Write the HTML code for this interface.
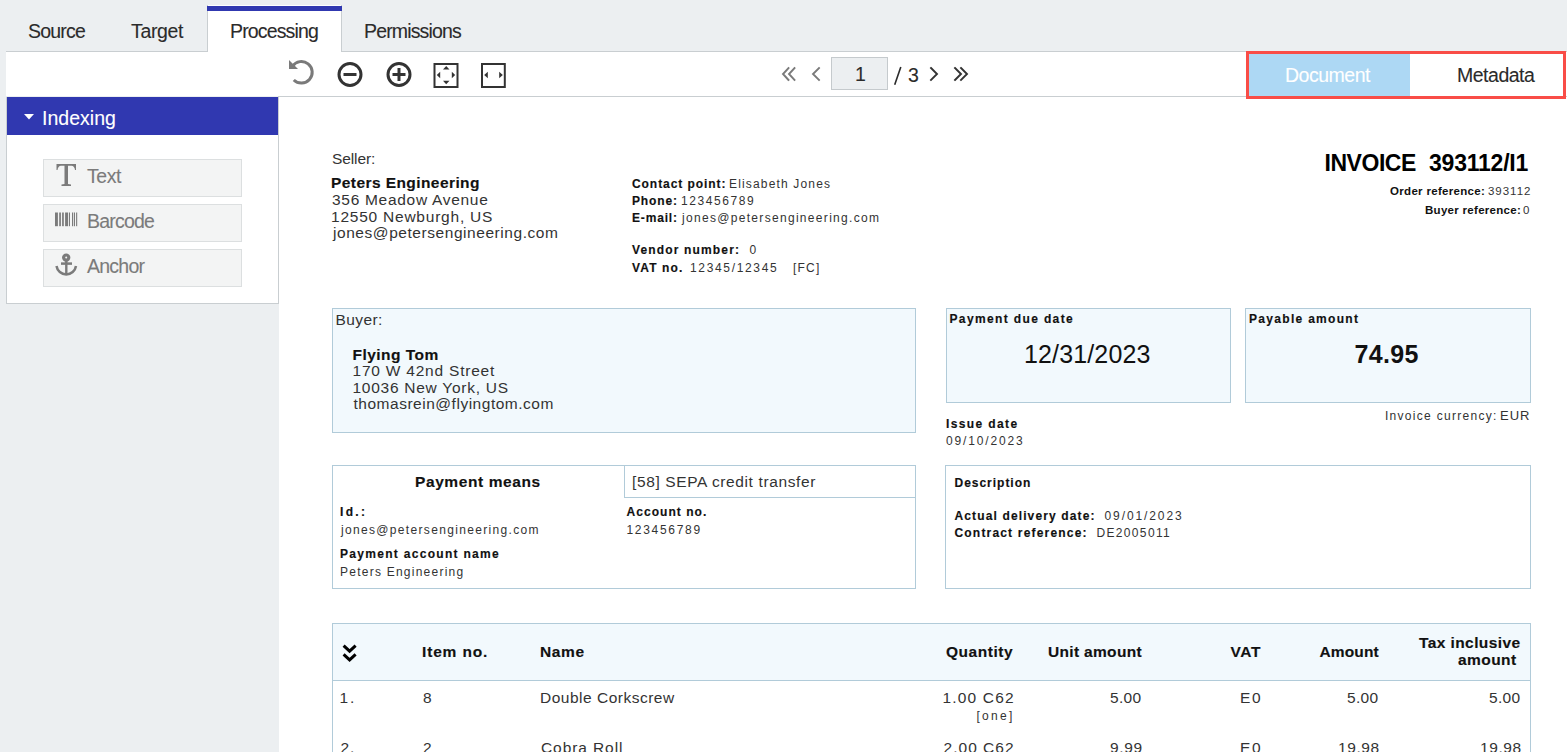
<!DOCTYPE html>
<html><head><meta charset="utf-8"><style>
html,body{margin:0;padding:0;}
body{width:1567px;height:752px;overflow:hidden;background:#eceff1;position:relative;font-family:"Liberation Sans",sans-serif;}
.r{position:absolute;}
.t{position:absolute;white-space:pre;line-height:0;}
</style></head><body>
<div class="r" style="left:6px;top:51px;width:1561px;height:1px;background:#c9ced1;"></div>
<div class="r" style="left:6px;top:52px;width:1561px;height:44px;background:#fff;"></div>
<div class="r" style="left:278px;top:96px;width:1289px;height:1px;background:#c9ced1;"></div>
<div class="r" style="left:279px;top:97px;width:1288px;height:655px;background:#fff;"></div>
<div class="r" style="left:207px;top:5px;width:135px;height:47px;background:#fff;box-sizing:border-box;border-left:1px solid #c9ced1;border-right:1px solid #c9ced1;"></div>
<div class="r" style="left:207px;top:6px;width:135px;height:5px;background:#3038b0;"></div>
<div class="r" style="left:6px;top:97px;width:273px;height:207px;background:#fff;box-sizing:border-box;border:1px solid #c9ced1;border-top:none;"></div>
<div class="r" style="left:7px;top:97px;width:271px;height:38px;background:#3038b0;"></div>
<div class="r" style="left:43px;top:159px;width:199px;height:38px;background:#f3f4f4;box-sizing:border-box;border:1px solid #dcdfe0;"></div>
<div class="r" style="left:43px;top:204px;width:199px;height:38px;background:#f3f4f4;box-sizing:border-box;border:1px solid #dcdfe0;"></div>
<div class="r" style="left:43px;top:249px;width:199px;height:38px;background:#f3f4f4;box-sizing:border-box;border:1px solid #dcdfe0;"></div>
<div class="r" style="left:831px;top:57px;width:57px;height:33px;background:#eceff1;box-sizing:border-box;border:1px solid #c5cacd;"></div>
<div class="r" style="left:1246px;top:51px;width:320px;height:48px;background:#fff;box-sizing:border-box;border:3px solid #f94d47;"></div>
<div class="r" style="left:1249px;top:54px;width:161px;height:42px;background:#add8f4;"></div>
<div class="r" style="left:332px;top:308px;width:584px;height:125px;background:#f2f9fd;box-sizing:border-box;border:1px solid #b1cbd9;"></div>
<div class="r" style="left:946px;top:308px;width:285px;height:95px;background:#f2f9fd;box-sizing:border-box;border:1px solid #b1cbd9;"></div>
<div class="r" style="left:1245px;top:308px;width:286px;height:95px;background:#f2f9fd;box-sizing:border-box;border:1px solid #b1cbd9;"></div>
<div class="r" style="left:332px;top:465px;width:584px;height:124px;background:#fff;box-sizing:border-box;border:1px solid #b1cbd9;"></div>
<div class="r" style="left:624px;top:465px;width:292px;height:33px;background:#fff;box-sizing:border-box;border:1px solid #b1cbd9;"></div>
<div class="r" style="left:945px;top:465px;width:586px;height:124px;background:#fff;box-sizing:border-box;border:1px solid #b1cbd9;"></div>
<div class="r" style="left:332px;top:623px;width:1199px;height:140px;background:#fff;box-sizing:border-box;border:1px solid #b1cbd9;"></div>
<div class="r" style="left:333px;top:624px;width:1197px;height:56px;background:#f2f9fd;"></div>
<div class="r" style="left:333px;top:680px;width:1197px;height:1px;background:#b1cbd9;"></div>
<svg class="r" style="left:0;top:0" width="1567" height="752" viewBox="0 0 1567 752">
<g fill="none" stroke-width="3">
 <path d="M292.55 66.1 A10.8 10.8 0 1 1 293.76 79.94" stroke="#7a7a7a"/>
 <circle cx="350" cy="74.5" r="11" stroke="#333"/>
 <circle cx="399" cy="74.5" r="11" stroke="#333"/>
</g>
<path d="M289 60 L289 69 L298 69 Z" fill="#7a7a7a"/>
<rect x="343.5" y="73" width="13" height="3" fill="#333"/>
<rect x="392.5" y="73" width="13" height="3" fill="#333"/>
<rect x="397.5" y="68" width="3" height="13" fill="#333"/>
<rect x="434.5" y="64" width="23" height="23" fill="none" stroke="#333" stroke-width="2"/>
<rect x="482" y="64" width="22.8" height="23" fill="none" stroke="#333" stroke-width="2"/>
<g fill="#333">
 <path d="M446.2 66 L449.5 69.5 L443 69.5 Z"/>
 <path d="M446.2 84.2 L449.5 80.8 L443 80.8 Z"/>
 <path d="M436.8 75 L440.2 71.8 L440.2 78.2 Z"/>
 <path d="M455.2 75 L451.8 71.8 L451.8 78.2 Z"/>
 <path d="M484.2 75 L487.8 71.8 L487.8 78.2 Z"/>
 <path d="M502.8 75 L499.2 71.8 L499.2 78.2 Z"/>
</g>
<g fill="none" stroke-width="1.9" stroke-linecap="square">
 <path d="M788.5 68 L783 74 L788.5 80 M794.5 68 L789 74 L794.5 80" stroke="#7a7a7a"/>
 <path d="M819 68 L813 74 L819 80" stroke="#7a7a7a"/>
 <path d="M931 68 L937 74 L931 80" stroke="#333"/>
 <path d="M955 68 L961 74 L955 80 M961 68 L967 74 L961 80" stroke="#333"/>
</g>
<g fill="none" stroke="#000" stroke-width="3" stroke-linejoin="miter">
 <path d="M343.6 645.6 L349.6 651.2 L355.6 645.6"/>
 <path d="M343.6 654.3 L349.6 659.9 L355.6 654.3"/>
</g>
<!-- T icon -->
<g fill="#7b7b7b">
 <path d="M56.5 164 H76 V170 H75 Q74.5 166 71.5 165.8 H68 V184 L71 184.6 V186 H61.5 V184.6 L64.5 184 V165.8 H61 Q58 166 57.5 170 H56.5 Z"/>
</g>
<!-- barcode -->
<g fill="#7b7b7b">
 <rect x="55" y="212.5" width="2.9" height="13.7"/>
 <rect x="59.2" y="212.5" width="1.7" height="13.7"/>
 <rect x="62.1" y="212.5" width="1.7" height="13.7"/>
 <rect x="65.1" y="212.5" width="2.9" height="13.7"/>
 <rect x="68.9" y="212.5" width="1.1" height="13.7"/>
 <rect x="72" y="212.5" width="1.1" height="13.7"/>
 <rect x="73.9" y="212.5" width="1.1" height="13.7"/>
 <rect x="76.1" y="212.5" width="1.1" height="13.7"/>
</g>
<!-- anchor -->
<g fill="none" stroke="#7b7b7b">
 <circle cx="66.2" cy="257.6" r="2.6" stroke-width="3.2"/>
 <path d="M66.3 260 V275" stroke-width="2.4"/>
 <path d="M61 263.6 H72" stroke-width="2.5"/>
 <path d="M56.5 266 A9.86 9.86 0 0 0 76 266" stroke-width="2.5"/>
</g>
<path d="M24 114 H34 L29 119.5 Z" fill="#fff"/>
<path d="M900.8 67.1 L894.7 84.8" stroke="#2b2b2b" stroke-width="1.6" fill="none"/>
</svg>
<div class="t" style="left:28.00px;top:31px;font-size:19.5px;letter-spacing:-0.788px;-webkit-text-stroke:0.1px #2b2b2b;color:#2b2b2b">Source</div>
<div class="t" style="left:131.00px;top:31px;font-size:19.5px;letter-spacing:-0.356px;-webkit-text-stroke:0.1px #2b2b2b;color:#2b2b2b">Target</div>
<div class="t" style="left:230.00px;top:31px;font-size:19.5px;letter-spacing:-0.846px;-webkit-text-stroke:0.1px #2b2b2b;color:#2b2b2b">Processing</div>
<div class="t" style="left:364.00px;top:31px;font-size:19.5px;letter-spacing:-0.844px;-webkit-text-stroke:0.1px #2b2b2b;color:#2b2b2b">Permissions</div>
<div class="t" style="left:1285.00px;top:75px;font-size:19.5px;letter-spacing:-0.494px;-webkit-text-stroke:0.1px #ffffff;color:#ffffff">Document</div>
<div class="t" style="left:1457.00px;top:75px;font-size:19.5px;letter-spacing:-0.494px;-webkit-text-stroke:0.1px #2b2b2b;color:#2b2b2b">Metadata</div>
<div class="t" style="left:855.00px;top:74px;font-size:19.5px;-webkit-text-stroke:0.1px #2b2b2b;color:#2b2b2b">1</div>
<div class="t" style="left:908.00px;top:75px;font-size:19.5px;-webkit-text-stroke:0.1px #2b2b2b;color:#2b2b2b">3</div>
<div class="t" style="left:42.00px;top:118px;font-size:19.5px;letter-spacing:0.017px;-webkit-text-stroke:0.1px #ffffff;color:#ffffff">Indexing</div>
<div class="t" style="left:87.00px;top:176px;font-size:19.5px;letter-spacing:-0.448px;-webkit-text-stroke:0.1px #7b7b7b;color:#7b7b7b">Text</div>
<div class="t" style="left:87.00px;top:221px;font-size:19.5px;letter-spacing:-0.797px;-webkit-text-stroke:0.1px #7b7b7b;color:#7b7b7b">Barcode</div>
<div class="t" style="left:87.00px;top:266px;font-size:19.5px;letter-spacing:-0.758px;-webkit-text-stroke:0.1px #7b7b7b;color:#7b7b7b">Anchor</div>
<div class="t" style="left:332.00px;top:159px;font-size:15.5px;letter-spacing:-0.105px;color:#333333">Seller:</div>
<div class="t" style="left:331.00px;top:183px;font-size:15.5px;font-weight:bold;letter-spacing:0.424px;-webkit-text-stroke:0.15px #111111;color:#111111">Peters Engineering</div>
<div class="t" style="left:332.00px;top:200px;font-size:15.5px;letter-spacing:0.704px;color:#333333">356 Meadow Avenue</div>
<div class="t" style="left:331.00px;top:217px;font-size:15.5px;letter-spacing:0.773px;color:#333333">12550 Newburgh, US</div>
<div class="t" style="left:333.00px;top:233px;font-size:15.5px;letter-spacing:0.556px;color:#333333">jones@petersengineering.com</div>
<div class="t" style="left:632.00px;top:184px;font-size:12px;font-weight:bold;letter-spacing:0.937px;-webkit-text-stroke:0.15px #111111;color:#111111">Contact point:</div>
<div class="t" style="left:729.00px;top:184px;font-size:12px;letter-spacing:1.163px;color:#333333">Elisabeth Jones</div>
<div class="t" style="left:632.00px;top:201px;font-size:12px;font-weight:bold;letter-spacing:0.866px;-webkit-text-stroke:0.15px #111111;color:#111111">Phone:</div>
<div class="t" style="left:681.00px;top:201px;font-size:12px;letter-spacing:1.576px;color:#333333">123456789</div>
<div class="t" style="left:632.00px;top:218px;font-size:12px;font-weight:bold;letter-spacing:0.831px;-webkit-text-stroke:0.15px #111111;color:#111111">E-mail:</div>
<div class="t" style="left:682.00px;top:218px;font-size:12px;letter-spacing:1.310px;color:#333333">jones@petersengineering.com</div>
<div class="t" style="left:632.00px;top:250px;font-size:12px;font-weight:bold;letter-spacing:1.153px;-webkit-text-stroke:0.15px #111111;color:#111111">Vendor number:</div>
<div class="t" style="left:749.50px;top:250px;font-size:12px;color:#333333">0</div>
<div class="t" style="left:632.00px;top:268px;font-size:12px;font-weight:bold;letter-spacing:1.131px;-webkit-text-stroke:0.15px #111111;color:#111111">VAT no.</div>
<div class="t" style="left:690.00px;top:268px;font-size:12px;letter-spacing:1.660px;color:#333333">12345/12345</div>
<div class="t" style="left:793.00px;top:268px;font-size:12px;letter-spacing:1.223px;color:#333333">[FC]</div>
<div class="t" style="left:1324.50px;top:163px;font-size:23px;font-weight:bold;letter-spacing:-0.455px;color:#000">INVOICE</div>
<div class="t" style="left:1429.00px;top:163px;font-size:23px;font-weight:bold;letter-spacing:-0.220px;color:#000">393112/I1</div>
<div class="t" style="left:1390.00px;top:191px;font-size:11.5px;font-weight:bold;letter-spacing:0.314px;color:#111">Order reference:</div>
<div class="t" style="left:1488.00px;top:191px;font-size:11.5px;letter-spacing:0.975px;color:#333333">393112</div>
<div class="t" style="left:1425.00px;top:210px;font-size:11.5px;font-weight:bold;letter-spacing:0.295px;color:#111">Buyer reference:</div>
<div class="t" style="left:1523.00px;top:210px;font-size:11.5px;color:#333333">0</div>
<div class="t" style="left:335.50px;top:320px;font-size:15.5px;letter-spacing:0.402px;color:#333333">Buyer:</div>
<div class="t" style="left:352.50px;top:355px;font-size:15.5px;font-weight:bold;letter-spacing:0.475px;-webkit-text-stroke:0.15px #111111;color:#111111">Flying Tom</div>
<div class="t" style="left:352.50px;top:371px;font-size:15.5px;letter-spacing:0.785px;color:#333333">170 W 42nd Street</div>
<div class="t" style="left:352.50px;top:388px;font-size:15.5px;letter-spacing:0.737px;color:#333333">10036 New York, US</div>
<div class="t" style="left:353.50px;top:404px;font-size:15.5px;letter-spacing:0.517px;color:#333333">thomasrein@flyingtom.com</div>
<div class="t" style="left:949.50px;top:319px;font-size:12px;font-weight:bold;letter-spacing:1.365px;-webkit-text-stroke:0.15px #111111;color:#111111">Payment due date</div>
<div class="t" style="left:1024.00px;top:354px;font-size:25px;letter-spacing:0.142px;color:#111">12/31/2023</div>
<div class="t" style="left:946.00px;top:424px;font-size:12px;font-weight:bold;letter-spacing:1.387px;-webkit-text-stroke:0.15px #111111;color:#111111">Issue date</div>
<div class="t" style="left:946.00px;top:441px;font-size:12px;letter-spacing:1.846px;color:#333333">09/10/2023</div>
<div class="t" style="left:1249.00px;top:319px;font-size:12px;font-weight:bold;letter-spacing:1.305px;-webkit-text-stroke:0.15px #111111;color:#111111">Payable amount</div>
<div class="t" style="left:1354.50px;top:354px;font-size:25px;font-weight:bold;letter-spacing:0.336px;color:#111">74.95</div>
<div class="t" style="left:1385.00px;top:416px;font-size:12px;letter-spacing:1.289px;color:#333333">Invoice currency:</div>
<div class="t" style="left:1500.00px;top:416px;font-size:13px;letter-spacing:0.970px;color:#333333">EUR</div>
<div class="t" style="left:415.00px;top:482px;font-size:15.5px;font-weight:bold;letter-spacing:0.591px;-webkit-text-stroke:0.15px #111111;color:#111111">Payment means</div>
<div class="t" style="left:632.00px;top:482px;font-size:15.5px;letter-spacing:0.614px;color:#333333">[58] SEPA credit transfer</div>
<div class="t" style="left:340.00px;top:512px;font-size:12px;font-weight:bold;letter-spacing:2.334px;-webkit-text-stroke:0.15px #111111;color:#111111">Id.:</div>
<div class="t" style="left:341.00px;top:530px;font-size:12px;letter-spacing:1.329px;color:#333333">jones@petersengineering.com</div>
<div class="t" style="left:340.00px;top:554px;font-size:12px;font-weight:bold;letter-spacing:1.296px;-webkit-text-stroke:0.15px #111111;color:#111111">Payment account name</div>
<div class="t" style="left:340.00px;top:572px;font-size:12px;letter-spacing:1.242px;color:#333333">Peters Engineering</div>
<div class="t" style="left:626.50px;top:512px;font-size:12px;font-weight:bold;letter-spacing:1.051px;-webkit-text-stroke:0.15px #111111;color:#111111">Account no.</div>
<div class="t" style="left:626.50px;top:530px;font-size:12px;letter-spacing:1.701px;color:#333333">123456789</div>
<div class="t" style="left:954.50px;top:483px;font-size:12px;font-weight:bold;letter-spacing:0.982px;-webkit-text-stroke:0.15px #111111;color:#111111">Description</div>
<div class="t" style="left:954.50px;top:516px;font-size:12px;font-weight:bold;letter-spacing:1.131px;-webkit-text-stroke:0.15px #111111;color:#111111">Actual delivery date:</div>
<div class="t" style="left:1104.50px;top:516px;font-size:12px;letter-spacing:1.902px;color:#333333">09/01/2023</div>
<div class="t" style="left:954.50px;top:533px;font-size:12px;font-weight:bold;letter-spacing:1.183px;-webkit-text-stroke:0.15px #111111;color:#111111">Contract reference:</div>
<div class="t" style="left:1096.50px;top:533px;font-size:12px;letter-spacing:1.335px;color:#333333">DE2005011</div>
<div class="t" style="left:422.00px;top:652px;font-size:15.5px;font-weight:bold;letter-spacing:0.841px;-webkit-text-stroke:0.15px #111111;color:#111111">Item no.</div>
<div class="t" style="left:540.00px;top:652px;font-size:15.5px;font-weight:bold;letter-spacing:0.635px;-webkit-text-stroke:0.15px #111111;color:#111111">Name</div>
<div class="t" style="left:946.00px;top:652px;font-size:15.5px;font-weight:bold;letter-spacing:0.537px;-webkit-text-stroke:0.15px #111111;color:#111111">Quantity</div>
<div class="t" style="left:1048.00px;top:652px;font-size:15.5px;font-weight:bold;letter-spacing:0.326px;-webkit-text-stroke:0.15px #111111;color:#111111">Unit amount</div>
<div class="t" style="left:1230.50px;top:652px;font-size:15.5px;font-weight:bold;letter-spacing:0.634px;-webkit-text-stroke:0.15px #111111;color:#111111">VAT</div>
<div class="t" style="left:1319.50px;top:652px;font-size:15.5px;font-weight:bold;letter-spacing:0.124px;-webkit-text-stroke:0.15px #111111;color:#111111">Amount</div>
<div class="t" style="left:1419.00px;top:643px;font-size:15.5px;font-weight:bold;letter-spacing:0.410px;-webkit-text-stroke:0.15px #111111;color:#111111">Tax inclusive</div>
<div class="t" style="left:1458.00px;top:660px;font-size:15.5px;font-weight:bold;letter-spacing:0.439px;-webkit-text-stroke:0.15px #111111;color:#111111">amount</div>
<div class="t" style="left:339.50px;top:698px;font-size:15.5px;letter-spacing:1.880px;color:#333333">1.</div>
<div class="t" style="left:423.00px;top:698px;font-size:15.5px;color:#333333">8</div>
<div class="t" style="left:540.00px;top:698px;font-size:15.5px;letter-spacing:0.504px;color:#333333">Double Corkscrew</div>
<div class="t" style="left:942.50px;top:698px;font-size:15.5px;letter-spacing:1.173px;color:#333333">1.00 C62</div>
<div class="t" style="left:976.50px;top:716px;font-size:12px;letter-spacing:2.286px;color:#333333">[one]</div>
<div class="t" style="left:1110.00px;top:698px;font-size:15.5px;letter-spacing:0.318px;color:#333333">5.00</div>
<div class="t" style="left:1240.00px;top:698px;font-size:15.5px;letter-spacing:1.662px;color:#333333">E0</div>
<div class="t" style="left:1347.00px;top:698px;font-size:15.5px;letter-spacing:0.318px;color:#333333">5.00</div>
<div class="t" style="left:1489.00px;top:698px;font-size:15.5px;letter-spacing:0.318px;color:#333333">5.00</div>
<div class="t" style="left:340.50px;top:748px;font-size:15.5px;letter-spacing:0.880px;color:#333333">2.</div>
<div class="t" style="left:423.00px;top:748px;font-size:15.5px;color:#333333">2</div>
<div class="t" style="left:541.00px;top:748px;font-size:15.5px;letter-spacing:0.913px;color:#333333">Cobra Roll</div>
<div class="t" style="left:943.50px;top:748px;font-size:15.5px;letter-spacing:1.030px;color:#333333">2.00 C62</div>
<div class="t" style="left:1110.00px;top:748px;font-size:15.5px;letter-spacing:0.651px;color:#333333">9.99</div>
<div class="t" style="left:1240.00px;top:748px;font-size:15.5px;letter-spacing:1.662px;color:#333333">E0</div>
<div class="t" style="left:1338.00px;top:748px;font-size:15.5px;letter-spacing:0.583px;color:#333333">19.98</div>
<div class="t" style="left:1480.00px;top:748px;font-size:15.5px;letter-spacing:0.583px;color:#333333">19.98</div>
</body></html>
